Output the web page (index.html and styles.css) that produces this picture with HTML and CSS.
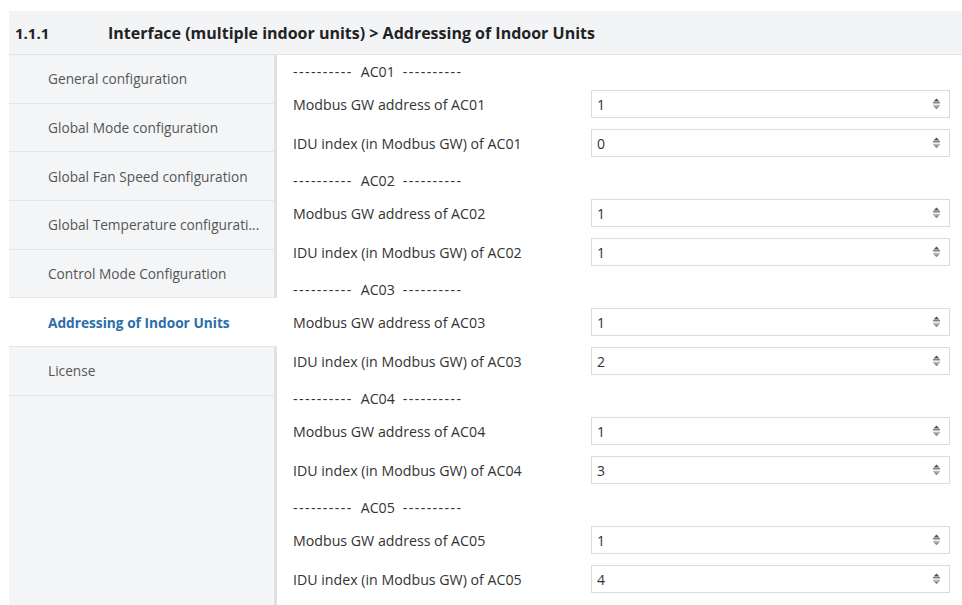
FILE: index.html
```html
<!DOCTYPE html>
<html lang="en">
<head>
<meta charset="utf-8">
<title>Addressing of Indoor Units</title>
<link rel="stylesheet" href="styles.css">
</head>
<body>
<div class="page">
  <header class="heading">
    <span class="heading-num">1.1.1</span>
    <span class="heading-title">Interface (multiple indoor units) &gt; Addressing of Indoor Units</span>
  </header>
  <div class="main">
    <nav class="sidebar">
      <div class="nav-item">General configuration</div>
      <div class="nav-item">Global Mode configuration</div>
      <div class="nav-item">Global Fan Speed configuration</div>
      <div class="nav-item">Global Temperature configurati...</div>
      <div class="nav-item">Control Mode Configuration</div>
      <div class="nav-item active">Addressing of Indoor Units</div>
      <div class="nav-item">License</div>
    </nav>
    <section class="content" id="content"></section>
  </div>
</div>
<script src="app.js"></script>
</body>
</html>
```
FILE: styles.css
```css
* { box-sizing: border-box; }

body {
  margin: 0;
  background: #ffffff;
  font-family: "Open Sans", "Noto Sans", sans-serif;
  color: #333333;
}

.page {
  padding: 11px 0 0 9px;
  height: 605px;
  overflow: hidden;
}

.heading {
  display: flex;
  align-items: center;
  height: 44px;
  background: #f3f4f6;
  border-bottom: 1px solid #e2e3e5;
  font-weight: 700;
  font-size: 16px;
  color: #222222;
}

.heading-num {
  width: 99px;
  padding-left: 6px;
  font-size: 15px;
}

.main {
  display: flex;
  height: 560px;
}

.sidebar {
  width: 268px;
  flex: none;
  background: #f4f5f7;
  border-right: 3px solid #e0e1e3;
  display: flex;
  flex-direction: column;
}

.nav-item {
  height: 48.7px;
  flex: none;
  display: flex;
  align-items: center;
  padding-left: 39px;
  font-size: 13.7px;
  color: #555555;
  border-bottom: 1px solid #e4e5e7;
}

.nav-item.active {
  background: #ffffff;
  color: #2b6ea8;
  font-weight: 700;
  margin-right: -3px;
}

.content {
  flex: 1;
  padding-left: 16px;
  display: flex;
  flex-direction: column;
}

.group-head {
  height: 32px;
  display: flex;
  align-items: center;
  gap: 8px;
  padding-top: 1px;
  font-size: 14.2px;
  color: #333333;
}

.dashes {
  letter-spacing: 1.4px;
}

.field {
  height: 39px;
  display: flex;
  align-items: flex-start;
}

.field.last {
  height: 38px;
}

.field-label {
  width: 298px;
  height: 28px;
  margin-top: 3px;
  display: flex;
  align-items: center;
  font-size: 14.2px;
  color: #333333;
}

.field-input {
  width: 359px;
  height: 28px;
  margin-top: 3px;
  border: 1px solid #dcdcdc;
  background: #ffffff;
  display: flex;
  align-items: center;
  justify-content: space-between;
  padding: 0 8px 0 5px;
  font-size: 14px;
  color: #333333;
}

.spin {
  width: 9px;
  height: 14px;
  display: block;
}
```
FILE: app.js
```js
// Builds the addressing rows for each indoor unit (AC01..AC05).
const units = [
  { name: "AC01", gw: 1, idx: 0 },
  { name: "AC02", gw: 1, idx: 1 },
  { name: "AC03", gw: 1, idx: 2 },
  { name: "AC04", gw: 1, idx: 3 },
  { name: "AC05", gw: 1, idx: 4 }
];

const spinner =
  '<svg class="spin" viewBox="0 0 9 14">' +
  '<path d="M4.5 1.5 L7.5 4.5 L1.5 4.5 Z" fill="#555555"/>' +
  '<rect x="1" y="5.2" width="7" height="1.2" fill="#666666"/>' +
  '<rect x="1" y="7.8" width="7" height="1" fill="#a8a8a8"/>' +
  '<path d="M1.5 9.3 L7.5 9.3 L4.5 12.3 Z" fill="#8a8a8a"/>' +
  '</svg>';

const root = document.getElementById("content");
let html = "";
for (const u of units) {
  html += '<div class="group-head"><span class="dashes">----------</span><span>' + u.name +
          '</span><span class="dashes">----------</span></div>';
  html += '<div class="field"><span class="field-label">Modbus GW address of ' + u.name +
          '</span><span class="field-input"><span>' + u.gw + '</span>' + spinner + '</span></div>';
  html += '<div class="field last"><span class="field-label">IDU index (in Modbus GW) of ' + u.name +
          '</span><span class="field-input"><span>' + u.idx + '</span>' + spinner + '</span></div>';
}
root.innerHTML = html;
```
